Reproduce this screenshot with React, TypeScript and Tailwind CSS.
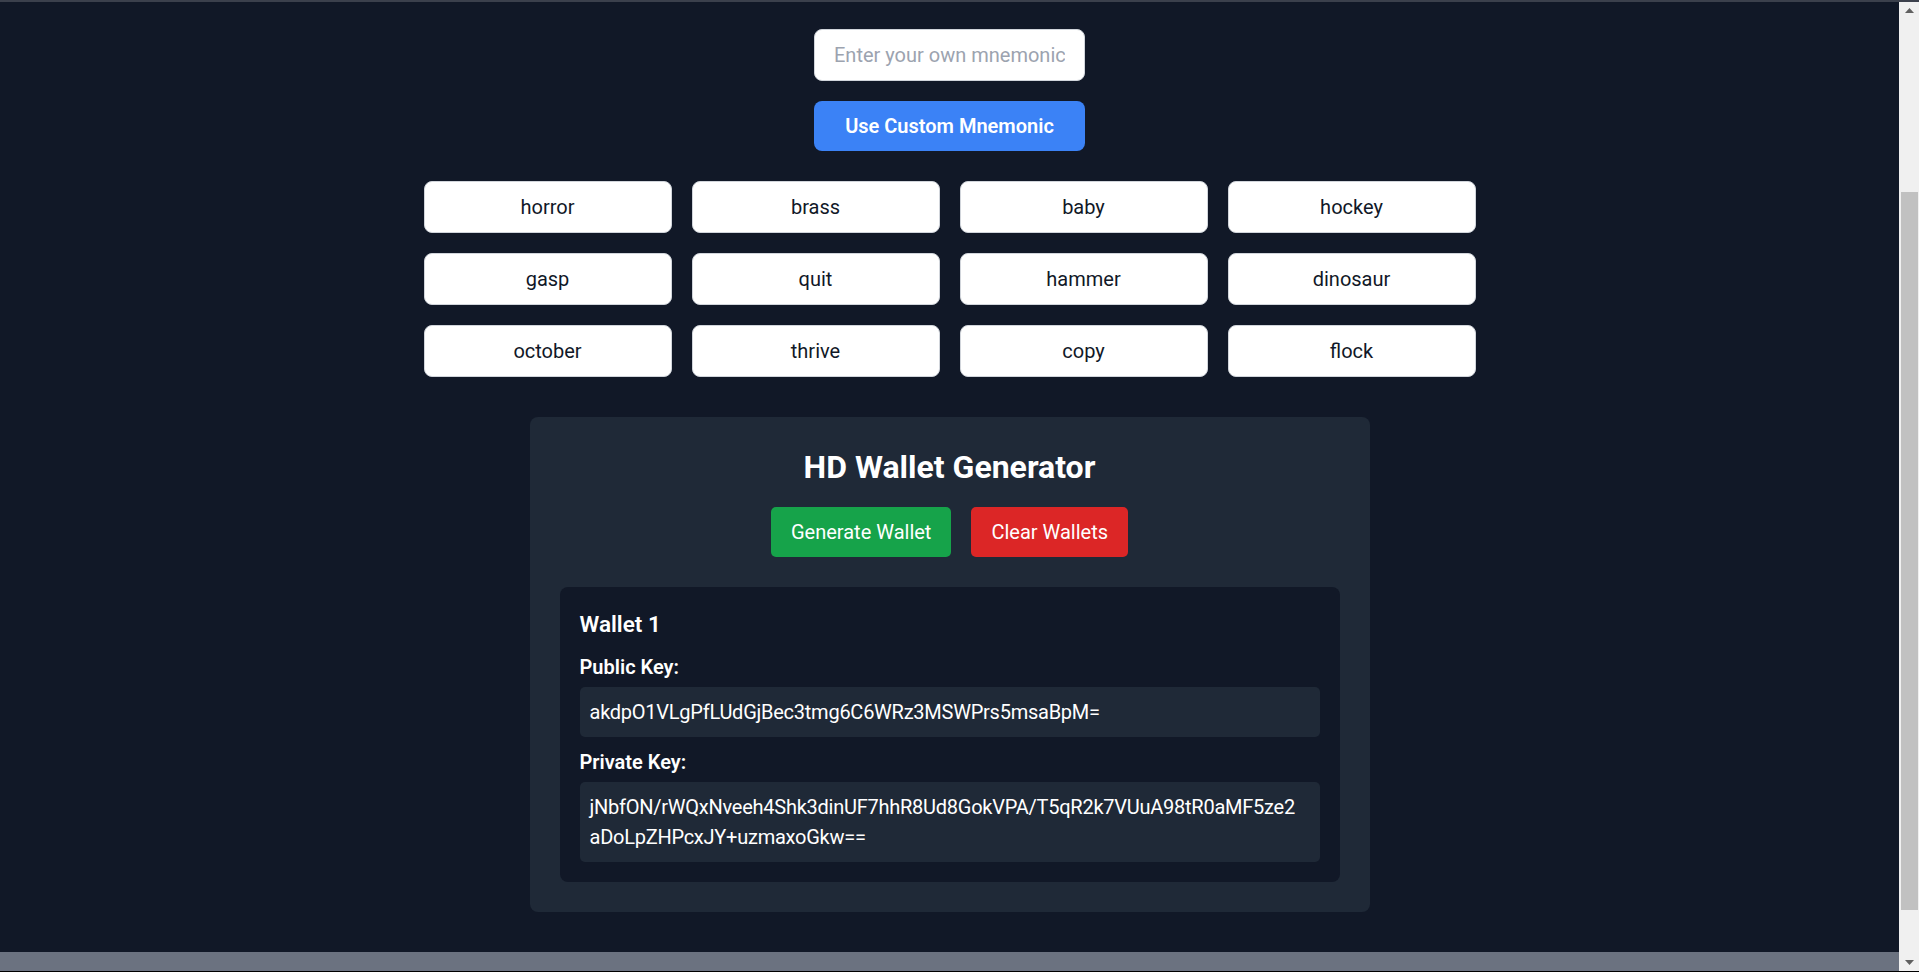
import React, { useState } from "react";

type Wallet = {
  publicKey: string;
  privateKey: string;
};

const MNEMONIC = [
  "horror",
  "brass",
  "baby",
  "hockey",
  "gasp",
  "quit",
  "hammer",
  "dinosaur",
  "october",
  "thrive",
  "copy",
  "flock",
];

const WALLETS: Wallet[] = [
  {
    publicKey: "akdpO1VLgPfLUdGjBec3tmg6C6WRz3MSWPrs5msaBpM=",
    privateKey:
      "jNbfON/rWQxNveeh4Shk3dinUF7hhR8Ud8GokVPA/T5qR2k7VUuA98tR0aMF5ze2aDoLpZHPcxJY+uzmaxoGkw==",
  },
];

// keys wrap at 64 chars like the original layout
const chunk = (s: string, n: number) => {
  const out: string[] = [];
  for (let i = 0; i < s.length; i += n) out.push(s.slice(i, i + n));
  return out;
};

const Scrollbar: React.FC = () => (
  <div className="flex w-[20px] shrink-0 flex-col bg-[#f0f0f0]">
    <div className="flex h-[17px] items-center justify-center">
      <svg width="9" height="5" viewBox="0 0 9 5">
        <path d="M0 5 L4.5 0 L9 5 Z" fill="#606060" />
      </svg>
    </div>
    <div className="flex-1">
      <div className="ml-[2px] mr-px mt-[173px] h-[718px] bg-[#c1c1c1]" />
    </div>
    <div className="flex h-[17px] items-center justify-center">
      <svg width="9" height="5" viewBox="0 0 9 5">
        <path d="M0 0 L4.5 5 L9 0 Z" fill="#606060" />
      </svg>
    </div>
  </div>
);

const KeyBox: React.FC<{ value: string }> = ({ value }) => (
  <p className="break-all rounded-[5px] bg-[#1f2937] p-[10px] text-[20px] leading-[30px] tracking-[-0.25px] text-white">
    {chunk(value, 64).map((line, i) => (
      <span key={i} className="block">
        {line}
      </span>
    ))}
  </p>
);

const WalletCard: React.FC<{ index: number; wallet: Wallet }> = ({
  index,
  wallet,
}) => (
  <div className="rounded-lg bg-[#111827] p-5">
    <h3 className="mb-[10px] text-[22.5px] font-semibold leading-[35px] text-white">
      Wallet {index + 1}
    </h3>
    <div className="mb-[10px]">
      <p className="mb-[5px] text-[20px] font-semibold leading-[30px] text-white">
        Public Key:
      </p>
      <KeyBox value={wallet.publicKey} />
    </div>
    <div>
      <p className="mb-[5px] text-[20px] font-semibold leading-[30px] text-white">
        Private Key:
      </p>
      <KeyBox value={wallet.privateKey} />
    </div>
  </div>
);

export default function App() {
  const [mnemonicInput, setMnemonicInput] = useState("");
  const [wallets, setWallets] = useState<Wallet[]>(WALLETS);

  return (
    <div className="flex h-[972px] flex-col overflow-hidden bg-[#111827] font-['Roboto',sans-serif]">
      <div className="h-[2px] shrink-0 bg-[#3b404c]" />

      <div className="flex min-h-0 flex-1">
        <main className="flex min-w-0 flex-1 flex-col items-center">
          <div className="flex flex-col items-center pt-[27px]">
            <input
              className="h-[52px] w-[271px] rounded-lg border border-[#d1d5db] bg-white px-[19px] text-[20px] text-[#111827] outline-none placeholder:text-[#9ca3af]"
              placeholder="Enter your own mnemonic"
              value={mnemonicInput}
              onChange={(e) => setMnemonicInput(e.target.value)}
            />
            <button className="mt-5 h-[50px] w-[271px] rounded-lg bg-[#3b82f6] text-[20px] font-semibold text-white">
              Use Custom Mnemonic
            </button>
          </div>

          <div className="mt-[30px] grid w-[1052px] grid-cols-4 gap-5">
            {MNEMONIC.map((word) => (
              <div
                key={word}
                className="flex h-[52px] items-center justify-center rounded-lg border border-[#d1d5db] bg-white text-[20px] text-[#111827]"
              >
                {word}
              </div>
            ))}
          </div>

          <section className="mt-10 w-[840px] rounded-lg bg-[#1f2937] p-[30px]">
            <h1 className="mb-5 text-center text-[32px] font-bold leading-[40px] text-white">
              HD Wallet Generator
            </h1>
            <div className="mb-[30px] flex justify-center gap-5">
              <button
                className="h-[50px] rounded-[5px] bg-[#16a34a] px-5 text-[20px] text-white"
                onClick={() => setWallets((w) => [...w, ...WALLETS])}
              >
                Generate Wallet
              </button>
              <button
                className="h-[50px] rounded-[5px] bg-[#dc2626] px-5 text-[20px] text-white"
                onClick={() => setWallets([])}
              >
                Clear Wallets
              </button>
            </div>
            {wallets.map((wallet, i) => (
              <WalletCard key={i} index={i} wallet={wallet} />
            ))}
          </section>

          <div className="flex-1" />
          <div className="h-[19px] w-full shrink-0 bg-[#6b7280]" />
        </main>

        <Scrollbar />
      </div>

      <div className="h-px shrink-0 bg-black" />
    </div>
  );
}
